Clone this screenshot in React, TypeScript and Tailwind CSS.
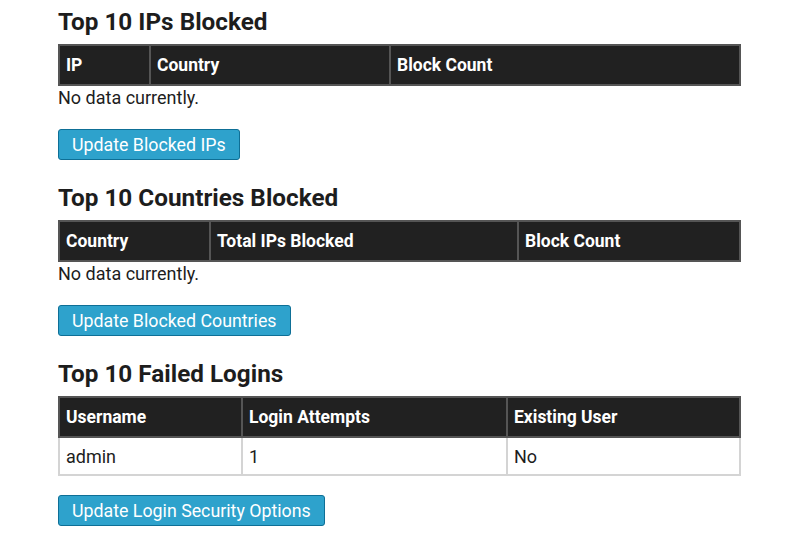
import React from "react";

type Col = { label: string; width: number };

interface Section {
  title: string;
  cols: Col[];
  rows: string[][];
  button: string;
}

const sections: Section[] = [
  {
    title: "Top 10 IPs Blocked",
    cols: [
      { label: "IP", width: 91 },
      { label: "Country", width: 240 },
      { label: "Block Count", width: 350 },
    ],
    rows: [],
    button: "Update Blocked IPs",
  },
  {
    title: "Top 10 Countries Blocked",
    cols: [
      { label: "Country", width: 151 },
      { label: "Total IPs Blocked", width: 308 },
      { label: "Block Count", width: 222 },
    ],
    rows: [],
    button: "Update Blocked Countries",
  },
  {
    title: "Top 10 Failed Logins",
    cols: [
      { label: "Username", width: 183 },
      { label: "Login Attempts", width: 265 },
      { label: "Existing User", width: 233 },
    ],
    rows: [["admin", "1", "No"]],
    button: "Update Login Security Options",
  },
];

const StatsTable: React.FC<{ section: Section }> = ({ section }) => (
  <div>
    <h2 className="text-[24.3px] font-bold leading-[32px] text-[#1d1d1d]">
      {section.title}
    </h2>
    <table className="mt-[6px] w-[681px] table-fixed border-collapse">
      <colgroup>
        {section.cols.map((c) => (
          <col key={c.label} style={{ width: c.width }} />
        ))}
      </colgroup>
      <thead>
        <tr className="h-[40px] bg-[#212121]">
          {section.cols.map((c) => (
            <th
              key={c.label}
              className="border-2 border-[#555555] px-[6px] text-left text-[17.5px] font-bold text-white"
            >
              {c.label}
            </th>
          ))}
        </tr>
      </thead>
      <tbody>
        {section.rows.map((row, i) => (
          <tr key={i} className="h-[38px] bg-white">
            {row.map((cell, j) => (
              <td
                key={j}
                className="border-2 border-[#d4d4d4] px-[6px] text-[18px] text-[#1d1d1d]"
              >
                {cell}
              </td>
            ))}
          </tr>
        ))}
      </tbody>
    </table>
    {section.rows.length === 0 && (
      <p className="text-[18px] leading-[24px] text-[#1d1d1d]">No data currently.</p>
    )}
    <button
      type="button"
      className="mt-[19px] h-[31px] rounded-[3px] border border-[#0e6f96] bg-[#2ea2cc] px-[13px] text-[17.8px] leading-none text-white"
    >
      {section.button}
    </button>
  </div>
);

export default function App() {
  return (
    <div
      className="min-h-[536px] w-[800px] bg-white px-[58px] pt-[6px]"
      style={{ fontFamily: "Roboto, 'Liberation Sans', sans-serif" }}
    >
      <div className="flex flex-col gap-[22px]">
        {sections.map((s) => (
          <StatsTable key={s.title} section={s} />
        ))}
      </div>
    </div>
  );
}
